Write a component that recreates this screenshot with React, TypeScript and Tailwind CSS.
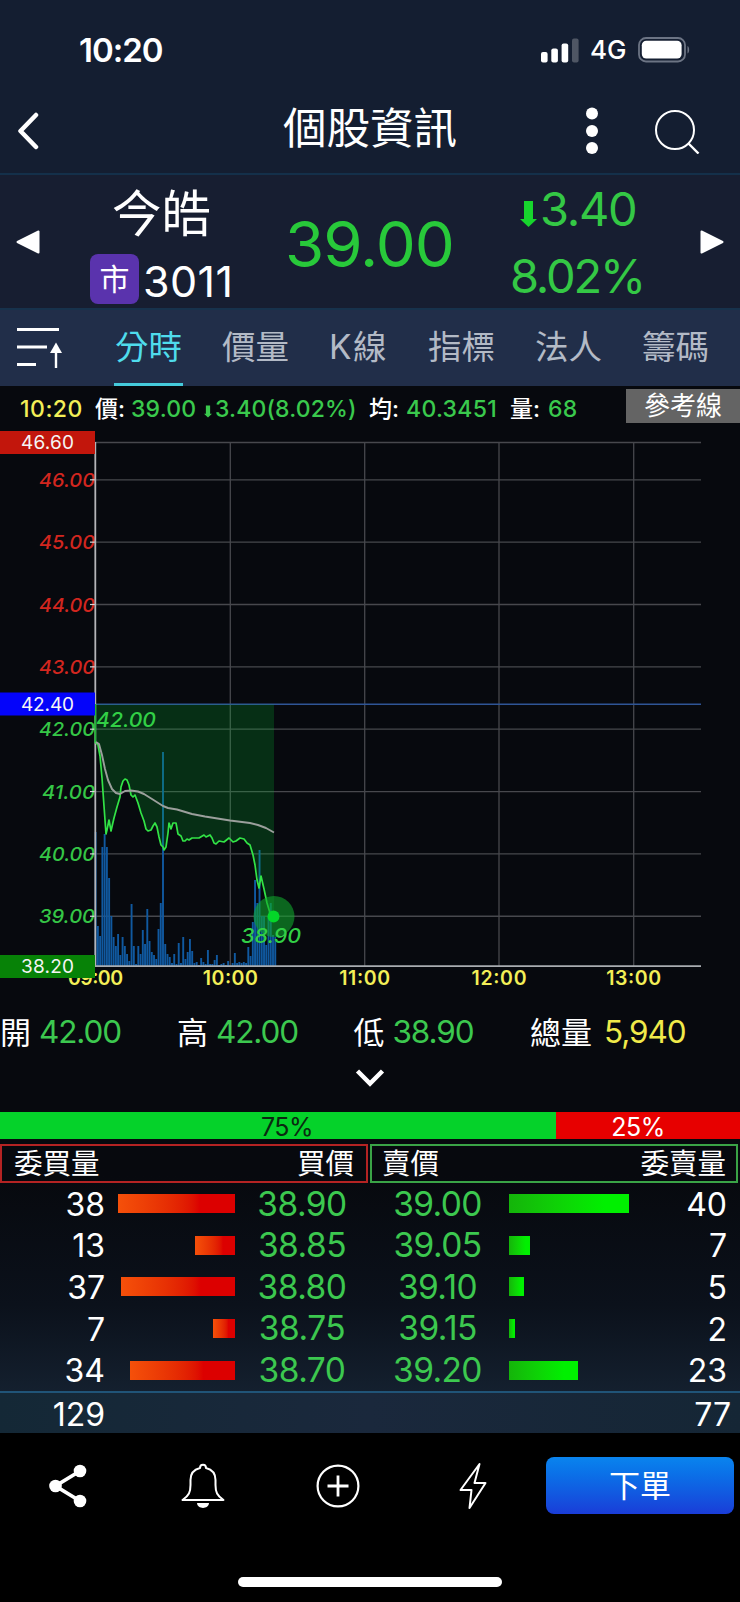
import React from 'react';

// Icons
const SignalIcon: React.FC<{ className?: string }> = ({ className }) => (
    <svg className={className} viewBox="0 0 38 25" fill="currentColor" aria-hidden="true">
        <rect x="0" y="14" width="6.6" height="10.5" rx="2" />
        <rect x="10.3" y="10.5" width="6.6" height="14" rx="2" />
        <rect x="20.6" y="5.5" width="6.6" height="19" rx="2" />
        <rect x="31" y="0.5" width="6.6" height="24" rx="2" opacity="0.25" />
    </svg>
);

const BatteryIcon: React.FC<{ className?: string }> = ({ className }) => (
    <svg className={className} viewBox="0 0 52 26" fill="none" aria-hidden="true">
        <rect x="1" y="1" width="46" height="23.5" rx="7" stroke="#6c7484" strokeWidth="1.8" />
        <rect x="3.8" y="3.8" width="39.8" height="17.8" rx="4.5" fill="currentColor" />
        <path d="M49.5 9c2.2 1.2 2.2 6.3 0 7.5z" fill="#6c7484" />
    </svg>
);

const BackIcon: React.FC<{ className?: string }> = ({ className }) => (
    <svg className={className} viewBox="0 0 24 40" fill="none" stroke="currentColor" strokeWidth="4.5" strokeLinecap="round" strokeLinejoin="round" aria-hidden="true">
        <path d="M20 5L4.5 21L20 37" />
    </svg>
);

const MoreIcon: React.FC<{ className?: string }> = ({ className }) => (
    <svg className={className} viewBox="0 0 12 48" fill="currentColor" aria-hidden="true">
        <circle cx="6" cy="7.5" r="6" />
        <circle cx="6" cy="25" r="6" />
        <circle cx="6" cy="42" r="6" />
    </svg>
);

const SearchIcon: React.FC<{ className?: string }> = ({ className }) => (
    <svg className={className} viewBox="0 0 48 48" fill="none" stroke="currentColor" strokeWidth="2" aria-hidden="true">
        <circle cx="21" cy="24" r="19" />
        <path d="M34.5 37.5L44.5 47.5" strokeWidth="2.4" />
    </svg>
);

const TriangleIcon: React.FC<{ className?: string }> = ({ className }) => (
    <svg className={className} viewBox="0 0 24 24" fill="currentColor" stroke="currentColor" strokeWidth="2" strokeLinejoin="round" aria-hidden="true">
        <path d="M1.5 12L22.5 1.5V22.5z" />
    </svg>
);

const DownArrow: React.FC<{ className?: string }> = ({ className }) => (
    <svg className={className} viewBox="0 0 17 26" fill="currentColor" aria-hidden="true">
        <path d="M4 0h9v18h4L8.5 26L0 18h4z" />
    </svg>
);

const SortIcon: React.FC<{ className?: string }> = ({ className }) => (
    <svg className={className} viewBox="0 0 46 42" fill="none" stroke="currentColor" strokeWidth="3" aria-hidden="true">
        <path d="M0 2.5H42M0 20H30M0 37.5H19" />
        <path d="M39 41V22" strokeWidth="2.4" />
        <path d="M39 15.5L45 26H33z" fill="currentColor" stroke="none" />
    </svg>
);

const ChevronDown: React.FC<{ className?: string }> = ({ className }) => (
    <svg className={className} viewBox="0 0 30 20" fill="none" stroke="currentColor" strokeWidth="4.5" aria-hidden="true">
        <path d="M2.5 3L15 15.5L27.5 3" />
    </svg>
);

const ShareIcon: React.FC<{ className?: string }> = ({ className }) => (
    <svg className={className} viewBox="0 0 38 44" fill="currentColor" stroke="currentColor" aria-hidden="true">
        <path d="M31 7L6.5 22L31 37" fill="none" strokeWidth="3.8" />
        <circle cx="31" cy="7" r="6.3" stroke="none" />
        <circle cx="6.5" cy="22" r="6.3" stroke="none" />
        <circle cx="31" cy="37" r="6.3" stroke="none" />
    </svg>
);

const BellIcon: React.FC<{ className?: string }> = ({ className }) => (
    <svg className={className} viewBox="0 0 44 46" fill="none" stroke="currentColor" strokeWidth="2" strokeLinejoin="round" aria-hidden="true">
        <path d="M19 5C19 0.5 25 0.5 25 5C31 6.5 34.5 10.5 34.5 17V22C34.5 29 36 32.5 42.5 37H1.5C8 32.5 9.5 29 9.5 22V17C9.5 10.5 13 6.5 19 5z" />
        <path d="M16 40H28C27.5 46.5 16.5 46.5 16 40z" fill="currentColor" stroke="none" />
    </svg>
);

const PlusIcon: React.FC<{ className?: string }> = ({ className }) => (
    <svg className={className} viewBox="0 0 44 44" fill="none" stroke="currentColor" strokeWidth="2.2" aria-hidden="true">
        <circle cx="22" cy="22" r="20.4" />
        <path d="M22 11.5V32.5M11.5 22H32.5" strokeWidth="2.8" />
    </svg>
);

const BoltIcon: React.FC<{ className?: string }> = ({ className }) => (
    <svg className={className} viewBox="0 0 28 48" fill="none" stroke="currentColor" strokeWidth="2" strokeLinejoin="round" aria-hidden="true">
        <path d="M20.5 2L1.5 28H12.5L10.5 46L26.5 21H15.5z" />
    </svg>
);

const tabs = ['分時', '價量', 'K線', '指標', '法人', '籌碼'];

const stats = [
  { label: '開', value: '42.00', color: 'ml-2 text-[#3cc84f]' },
  { label: '高', value: '42.00', color: 'ml-2 text-[#3cc84f]' },
  { label: '低', value: '38.90', color: 'ml-2 text-[#3cc84f]' },
  { label: '總量', value: '5,940', color: 'ml-3 text-[#f0ea4a]' },
];

const orders = [
  { bidQty: 38, bid: '38.90', ask: '39.00', askQty: 40 },
  { bidQty: 13, bid: '38.85', ask: '39.05', askQty: 7 },
  { bidQty: 37, bid: '38.80', ask: '39.10', askQty: 5 },
  { bidQty: 7, bid: '38.75', ask: '39.15', askQty: 2 },
  { bidQty: 34, bid: '38.70', ask: '39.20', askQty: 23 },
];

// Volume per minute, as bar heights in chart units
const volumes = [
  134, 40, 30, 119, 132, 119, 88, 50, 29, 20, 32, 11, 29, 20, 12, 5, 62, 20, 2, 20,
  12, 36, 22, 57, 25, 14, 11, 7, 37, 63, 214, 22, 12, 9, 3, 12, 2, 23, 3, 29,
  7, 14, 27, 15, 3, 4, 1, 8, 4, 2, 16, 2, 2, 6, 11, 1, 2, 3, 1, 5,
  1, 3, 13, 3, 4, 3, 4, 3, 19, 10, 44, 86, 63, 116, 50, 50, 21, 50, 63, 31, 29,
];

const pricePath =
  '95,742 98,745 100,756 102,778 104,806 106,834 107,830 109,820 111,831 114,818 117,807 120,797 121,787 123,781 125,779 127,780 129,785 131,795 133,797 135,795 138,803 141,813 144,821 146,829 148,831 151,830 153,826 155,823 157,827 159,837 161,845 163,847 164,850 166,847 168,833 169,823 171,829 173,823 176,823 178,834 181,836 183,841 185,841 187,839 189,840 192,838 199,838 204,835 206,837 210,835 212,838 214,843 216,844 219,841 224,842 229,838 233,842 236,841 240,838 244,839 247,843 250,845 253,855 255,865 257,880 259,888 261,876 264,889 267,903 270,913 274,916';

const averagePath =
  '96,742 99,744 102,755 105,769 108,780 112,789 116,793 120,794 125,791 131,790.5 138,791.5 144,794 152,799 163,806 168,808 177,809.5 192,814 205,816.5 230,820.5 250,823 258,825 266,828 274,832.5';

const priceLevels = [46, 45, 44, 43, 42, 41, 40, 39];

const hours = [
  { x: 95.5, label: '09:00' },
  { x: 230.3, label: '10:00' },
  { x: 364.7, label: '11:00' },
  { x: 499, label: '12:00' },
  { x: 633.7, label: '13:00' },
];

const priceY = (price: number) => 479.8 + (46 - price) * 62.35;

const tags = [
  { y: 431, label: '46.60', color: '#c2160c' },
  { y: 692.5, label: '42.40', color: '#0404fa' },
  { y: 955, label: '38.20', color: '#078207' },
];

const PriceChart: React.FC = () => (
  <svg className="block h-[572px] w-[740px]" viewBox="0 428 740 572" fontFamily="Inter, sans-serif">
    <g stroke="#47484d" strokeWidth="1.3">
      <path d="M95 442.5H701" />
      {priceLevels.map((price) => (
        <path key={price} d={`M95 ${priceY(price)}H701`} />
      ))}
      {hours.slice(1).map((hour) => (
        <path key={hour.label} d={`M${hour.x} 442V966`} />
      ))}
    </g>
    {priceLevels.map((price) => (
      <text
        key={price}
        x={price === 41 ? 42 : 39}
        y={priceY(price) + 7.2}
        fontSize="19"
        fontStyle="italic"
        fontWeight="500"
        textLength={price === 41 ? 53 : 56}
        lengthAdjust="spacingAndGlyphs"
        fill={price > 42 ? '#d2261f' : '#35c646'}
      >
        {price.toFixed(2)}
      </text>
    ))}
    {priceLevels.map((price) => (
      <path key={price} d={`M90 ${priceY(price)}h5`} stroke="#d8d8d8" strokeWidth="1.2" />
    ))}
    <path d="M95 704.3H701" stroke="#2f5596" strokeWidth="1.5" />
    <g fill="#1059a0">
      {volumes.map((height, i) => (
        <rect key={i} x={94.7 + i * 2.245} y={966 - height} width="1.9" height={height} />
      ))}
    </g>
    <polygon points={`95,704.5 ${pricePath} 274,704.5`} fill="#04c832" opacity="0.2" />
    <path d="M95.3 442V966" stroke="#b4b4b8" strokeWidth="1.8" />
    <path d="M95 966.2H701" stroke="#a9acb1" strokeWidth="1.8" />
    <path d="M95.3 704V743" stroke="#20b636" strokeWidth="1.8" />
    <polyline points={pricePath} fill="none" stroke="#32e346" strokeWidth="1.7" strokeLinejoin="round" />
    <polyline points={averagePath} fill="none" stroke="#9b9f9c" strokeWidth="1.9" strokeLinejoin="round" />
    <circle cx="274" cy="916.5" r="20.5" fill="#11a52c" opacity="0.6" />
    <circle cx="273.5" cy="916.5" r="6" fill="#04d629" />
    <g fontSize="20" fontStyle="italic" fontWeight="500" fill="#32cf46">
      <text x="96" y="726.5" textLength="60" lengthAdjust="spacingAndGlyphs">42.00</text>
      <text x="241" y="943" textLength="60" lengthAdjust="spacingAndGlyphs">38.90</text>
    </g>
    <g fontSize="19.5" fontWeight="600" fill="#f3ef57" textAnchor="middle">
      {hours.map((hour) => (
        <text key={hour.label} x={hour.x} y="985" textLength={hour.label === '11:00' ? 51 : 55}>{hour.label}</text>
      ))}
    </g>
    {tags.map((tag) => (
      <g key={tag.label}>
        <rect x="0" y={tag.y} width="95" height="23" fill={tag.color} />
        <text x="21" y={tag.y + 18.3} fontSize="19" fill="#f5f5f5" textLength="53">{tag.label}</text>
      </g>
    ))}
  </svg>
);

const App: React.FC = () => {
  return (
    <div className="flex h-[1602px] w-[740px] flex-col overflow-hidden bg-black font-['Inter','Noto_Sans_CJK_TC',sans-serif] leading-none text-white">
      <header className="flex h-[175px] flex-col border-b-2 border-[#14304a] bg-[#141e31]">
        <div className="flex h-[100px] items-center pl-[79px] pr-[50px]">
          <span className="text-[33px] font-semibold tracking-[-1px]">10:20</span>
          <SignalIcon className="ml-auto h-[25px] w-[38px]" />
          <span className="ml-[11px] w-[48px] text-[26px] font-medium">4G</span>
          <BatteryIcon className="h-[26px] w-[52px]" />
        </div>
        <div className="flex h-[60px] items-center pl-4 pr-[38px]">
          <BackIcon className="h-10 w-6" />
          <h1 className="ml-[243px] pb-1 text-[43.5px] leading-[52px]">個股資訊</h1>
          <MoreIcon className="ml-auto h-12 w-3" />
          <SearchIcon className="ml-[56px] h-12 w-12" />
        </div>
      </header>

      <section className="flex h-[135px] items-center border-b-2 border-[#17324c] bg-[#171e31] px-4">
        <TriangleIcon className="h-6 w-6 shrink-0" />
        <div className="ml-[50px] flex w-[160px] shrink-0 flex-col gap-[9px] pt-1">
          <span className="pl-[22px] text-[49.5px] leading-[62px]">今皓</span>
          <div className="flex items-center gap-1">
            <span className="flex h-[50px] w-[49px] items-center justify-center rounded-lg bg-[#5a33ad] text-[30px]">市</span>
            <span className="pt-1 text-[43px] tracking-[0.4px]">3011</span>
          </div>
        </div>
        <span className="ml-[35px] w-[190px] shrink-0 pt-1 text-[63.5px] tracking-[-1px] text-[#28c93a]">39.00</span>
        <div className="ml-[35px] flex w-[150px] shrink-0 flex-col gap-5 text-[47px] text-[#34c845]">
          <div className="flex items-center pl-[10px]">
            <DownArrow className="mt-3 h-[26px] w-[17px] text-[#17d52d]" />
            <span className="ml-[3px] tracking-[-1.3px]">3.40</span>
          </div>
          <span className="tracking-[-2.2px]">8.02%</span>
        </div>
        <TriangleIcon className="ml-auto h-6 w-6 shrink-0 rotate-180" />
      </section>

      <nav className="flex h-[76px] items-center bg-[#212e49] pl-[17px]">
        <SortIcon className="h-[42px] w-[46px]" />
        <div className="ml-[51px] flex h-full gap-[38px]">
          {tabs.map((tab, i) => (
            <span
              key={tab}
              className={`flex h-full items-center border-b-[3px] px-px pt-[2px] text-[33.5px] ${i === 0 ? 'border-[#45cbdc] text-[#4fdcec]' : 'border-transparent text-[#b3bac6]'} ${i === 2 ? 'tracking-[1.5px]' : ''}`}
            >
              {tab}
            </span>
          ))}
        </div>
      </nav>

      <main className="flex h-[726px] flex-col bg-[#07090e]">
        <div className="flex h-[42px] items-center pl-5 text-[23px] font-medium text-[#3ac94d]">
          <span className="w-[75px] pt-1 tracking-[0.5px] text-[#f3ef57]">10:20</span>
          <span className="w-[36px] pt-1 text-white">價:</span>
          <span className="w-[73px] pt-1 tracking-[0.2px]">39.00</span>
          <DownArrow className="mt-2 h-[13px] w-2" />
          <span className="ml-[3px] w-[154px] pt-1 tracking-[0.15px]">3.40(8.02%)</span>
          <span className="w-[37px] pt-1 text-white">均:</span>
          <span className="w-[104px] pt-1 tracking-[0.3px]">40.3451</span>
          <span className="w-[38px] pt-1 text-white">量:</span>
          <span className="pt-1 tracking-[0.3px]">68</span>
          <button className="mb-[2px] ml-auto h-[34px] w-[114px] bg-[#646464] text-[26px] font-normal leading-none text-white">參考線</button>
        </div>
        <PriceChart />
        <div className="mt-[14px] grid h-[36px] grid-cols-[177px_176.5px_176.5px_1fr] items-center">
          {stats.map((stat) => (
            <div key={stat.label} className="flex items-center text-[31px]">
              <span>{stat.label}</span>
              <span className={`text-[31.5px] tracking-[-1.1px] ${stat.color}`}>{stat.value}</span>
            </div>
          ))}
        </div>
        <ChevronDown className="mx-auto mt-[18px] h-5 w-[30px]" />
      </main>

      <section className="flex h-[321px] flex-col bg-linear-to-b from-[#07090e] from-20% via-[#0b111b] via-60% to-[#182738]">
        <div className="flex h-[27px] shrink-0 text-[25px] leading-[30px] tracking-[-0.5px]">
          <div className="w-[556px] bg-[#05d22a] pl-[18px] text-center text-[#0a2a10]">75%</div>
          <div className="flex-1 bg-[#e70000] pr-5 text-center">25%</div>
        </div>
        <div className="mt-[5px] flex h-[39px] shrink-0 gap-[2px] pr-[2px] text-[28.5px]">
          <div className="flex w-[368px] items-center justify-between border-2 border-[#b42323] px-3 pt-px">
            <span>委買量</span>
            <span>買價</span>
          </div>
          <div className="flex flex-1 items-center justify-between border-2 border-[#3aa346] px-[10px] pt-px">
            <span>賣價</span>
            <span>委賣量</span>
          </div>
        </div>
        <div className="flex h-[208px] shrink-0 flex-col">
          {orders.map((row) => (
            <div key={row.bid} className="flex flex-1 items-center text-[32px]">
              <span className="w-[105px] pt-[2px] text-right">{row.bidQty}</span>
              <div className="flex w-[130px] justify-end">
                <div className="h-[19px] bg-linear-to-r from-[#f5500a] to-[#dc0000] to-70%" style={{ width: row.bidQty * 3.08 }} />
              </div>
              <span className="w-[134px] pt-px text-center text-[33.5px] tracking-[-0.5px] text-[#3cc84f]">{row.bid}</span>
              <span className="w-[137px] pt-px text-center text-[33.5px] tracking-[-0.6px] text-[#3cc84f]">{row.ask}</span>
              <div className="ml-[3px] h-[19px] bg-linear-to-r from-[#14b40a] to-[#00f000] to-80%" style={{ width: row.askQty * 3 }} />
              <span className="ml-auto pr-[13px] pt-[2px] text-right">{row.askQty}</span>
            </div>
          ))}
        </div>
        <div className="flex flex-1 items-center justify-between border-t-2 border-[#205478] bg-linear-to-r from-[#142836] via-[#1a283c] to-[#152635] pr-[9px] pt-1 text-[32px]">
          <span className="w-[105px] text-right">129</span>
          <span>77</span>
        </div>
      </section>

      <footer className="flex h-[169px] flex-col items-center justify-between pb-[15px] pt-6">
        <div className="flex w-full items-center pl-[49px] pr-[6px]">
          <ShareIcon className="h-11 w-[38px]" />
          <BellIcon className="ml-[94px] h-[46px] w-11" />
          <PlusIcon className="ml-[91px] h-11 w-11" />
          <BoltIcon className="ml-[99px] h-12 w-7" />
          <button className="ml-auto h-[57px] w-[188px] rounded-lg bg-linear-to-b from-[#0a84ee] to-[#1a3cd8] text-[31px] leading-none">下單</button>
        </div>
        <div className="h-[10px] w-[264px] rounded-full bg-white" />
      </footer>
    </div>
  );
};

export default App;
